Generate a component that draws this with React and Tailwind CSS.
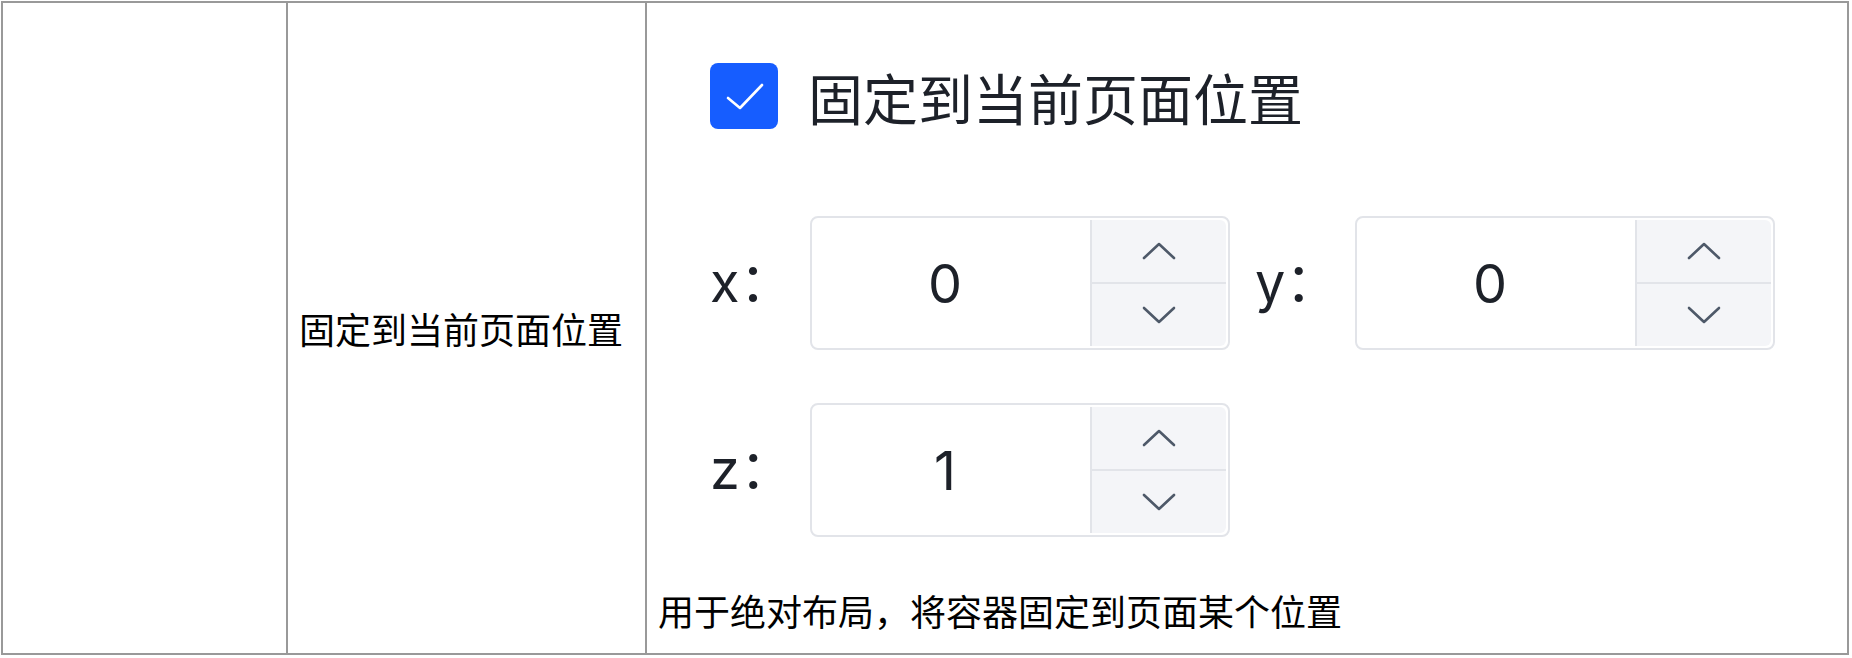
import React from "react";

const CJK = { fontFamily: '"Noto Sans CJK SC", "Noto Sans", sans-serif' };
const UI = { fontFamily: 'Inter, "Noto Sans CJK SC", sans-serif' };

function Chevron({ up }) {
  return (
    <svg width="34" height="18" viewBox="0 0 34 18" fill="none">
      <polyline
        points={up ? "2,16 17,2 32,16" : "2,2 17,16 32,2"}
        stroke="#4e5969"
        strokeWidth="2.6"
        strokeLinecap="round"
        strokeLinejoin="round"
      />
    </svg>
  );
}

function NumberInput({ value }) {
  return (
    <div className="flex h-[134px] w-[420px] rounded-[8px] border-2 border-[#e2e4e9] bg-white p-[2px]">
      <div className="flex flex-1 items-center justify-center pr-[14px] text-[54px] text-[#1d2129]" style={UI}>
        {value}
      </div>
      <div className="flex w-[136px] flex-col rounded-r-[6px] border-l-2 border-[#e2e4e9] bg-[#f4f5f8]">
        <div className="flex flex-1 items-center justify-center border-b-2 border-[#e2e4e9]">
          <Chevron up />
        </div>
        <div className="flex flex-1 items-center justify-center">
          <Chevron />
        </div>
      </div>
    </div>
  );
}

function Label({ children }) {
  return (
    <div className="w-[100px] text-[54px] leading-none text-[#1d2129]" style={UI}>
      {children}
    </div>
  );
}

export default function App() {
  return (
    <div className="h-[658px] w-[1852px] bg-white pl-px pt-px">
      <div className="flex h-[654px] w-[1848px] border-2 border-[#999999]">
        <div className="w-[285px] shrink-0 border-r-2 border-[#999999]" />
        <div
          className="flex w-[359px] shrink-0 items-center border-r-2 border-[#999999] pl-[11px] text-[36px] leading-[36px] text-black"
          style={CJK}
        >
          固定到当前页面位置
        </div>
        <div className="flex flex-1 flex-col pl-[11px]">
          <div className="flex flex-col pl-[52px] pt-[60px]">
            <div className="flex h-[66px] items-center">
              <div className="flex h-[66px] w-[68px] items-center justify-center rounded-[8px] bg-[#165dff]">
                <svg width="68" height="66" viewBox="0 0 68 66" fill="none">
                  <polyline
                    points="18,35 30,45 52,22"
                    stroke="white"
                    strokeWidth="2.6"
                    strokeLinecap="round"
                    strokeLinejoin="round"
                  />
                </svg>
              </div>
              <div className="ml-[30px] text-[55px] leading-none text-[#1d2129]" style={CJK}>
                固定到当前页面位置
              </div>
            </div>
            <div className="mt-[87px] flex items-center">
              <Label>x：</Label>
              <NumberInput value="0" />
              <div className="ml-[25px]">
                <Label>y：</Label>
              </div>
              <NumberInput value="0" />
            </div>
            <div className="mt-[53px] flex items-center">
              <Label>z：</Label>
              <NumberInput value="1" />
            </div>
          </div>
          <div className="mt-[55px] text-[36px] leading-[36px] text-black" style={CJK}>
            用于绝对布局，将容器固定到页面某个位置
          </div>
        </div>
      </div>
    </div>
  );
}
